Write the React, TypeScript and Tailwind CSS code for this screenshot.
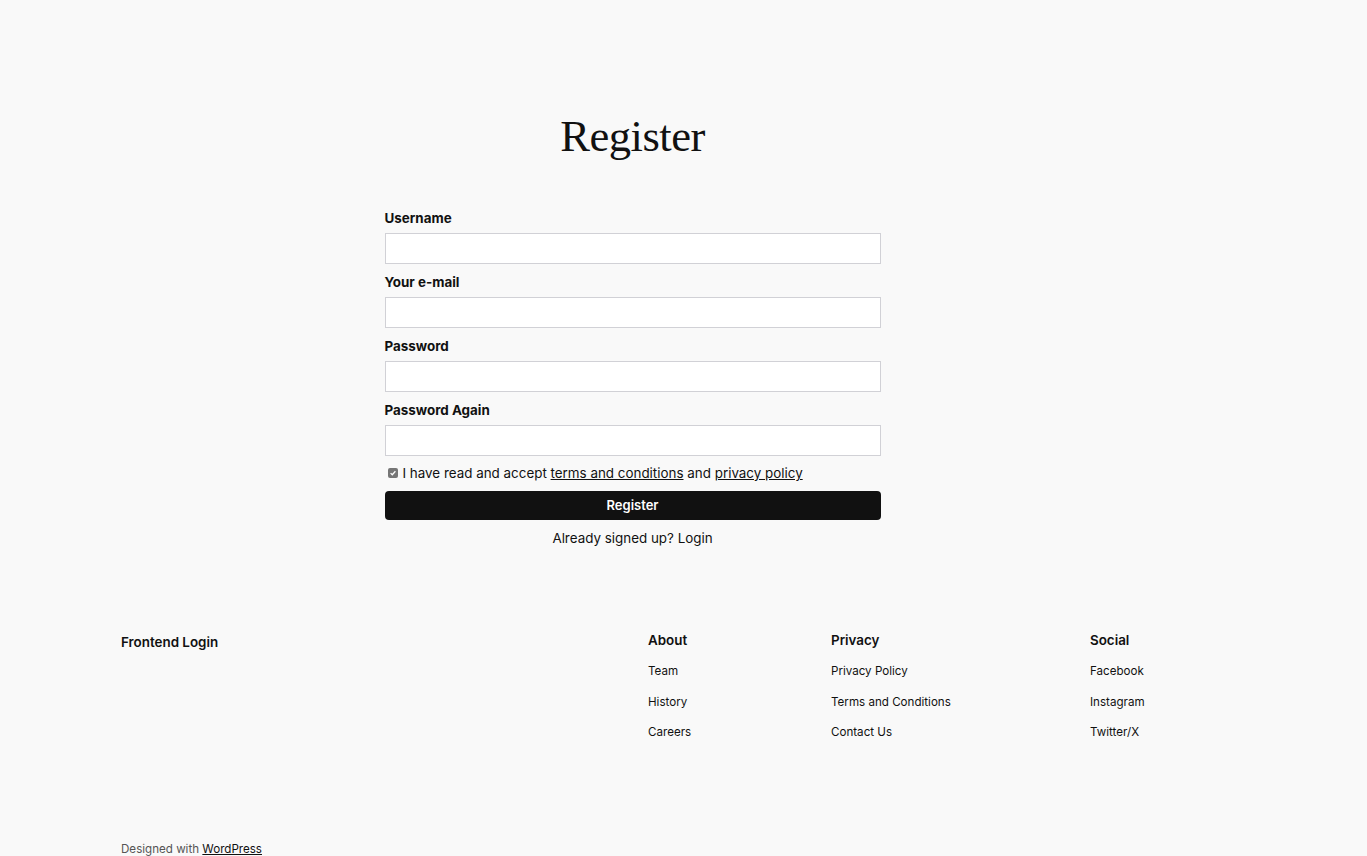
import React from "react";

function Field({ label, type = "text" }: { label: string; type?: string }) {
  return (
    <div className="flex flex-col">
      <label className="text-[13.4px] leading-[20px] font-bold text-[#111]">{label}</label>
      <input
        type={type}
        className="mt-[5px] h-[31px] w-full border border-[#d1d1d6] bg-white px-2 text-[13px] outline-none"
      />
    </div>
  );
}

function FooterCol({ title, links, w }: { title: string; links: string[]; w: string }) {
  return (
    <div className={`flex flex-col ${w}`}>
      <div className="text-[13.4px] leading-[20px] font-semibold text-[#111]">{title}</div>
      <div className="mt-[11px] flex flex-col gap-[10.5px]">
        {links.map((l) => (
          <a key={l} className="text-[11.6px] leading-[20px] text-[#111]">
            {l}
          </a>
        ))}
      </div>
    </div>
  );
}

export default function App() {
  return (
    <div
      className="min-h-[856px] w-full bg-[#f9f9f9] text-[#111]"
      style={{ fontFamily: "Inter, 'Noto Sans', sans-serif" }}
    >
      <main className="flex flex-col items-center pt-[108px] pr-[102px]">
        <h1
          className="text-[44.6px] leading-[56px] font-normal tracking-[-0.5px] text-[#111]"
          style={{ fontFamily: "'Liberation Serif', 'DejaVu Serif', serif" }}
        >
          Register
        </h1>
        <form className="mt-[44px] flex w-[496px] flex-col gap-[8px]" onSubmit={(e) => e.preventDefault()}>
          <Field label="Username" />
          <Field label="Your e-mail" type="email" />
          <Field label="Password" type="password" />
          <Field label="Password Again" type="password" />
          <div className="-mt-[1px] flex h-[20px] items-center text-[13.4px] leading-[20px] text-[#111]">
            <span className="mx-[3px] flex h-[10px] w-[10px] items-center justify-center rounded-[2px] bg-[#767676]">
              <svg viewBox="0 0 10 10" className="h-[8px] w-[8px]">
                <path d="M2 5.2 L4.1 7.2 L8 2.8" stroke="#fff" strokeWidth="1.6" fill="none" />
              </svg>
            </span>
            <span className="ml-[2px]">
              I have read and accept <a className="underline">terms and conditions</a> and{" "}
              <a className="underline">privacy policy</a>
            </span>
          </div>
          <button
            type="submit"
            className="h-[29px] w-full rounded-[4px] bg-[#111] text-[13px] font-semibold text-white"
          >
            Register
          </button>
          <div className="text-center text-[13.4px] leading-[20px] text-[#111]">
            Already signed up? <a>Login</a>
          </div>
        </form>
      </main>
      <footer className="mt-[82px] px-[121px]">
        <div className="flex">
          <div className="w-[527px] pt-[2px] text-[13.4px] leading-[20px] font-semibold text-[#111]">
            Frontend Login
          </div>
          <FooterCol title="About" links={["Team", "History", "Careers"]} w="w-[183px]" />
          <FooterCol
            title="Privacy"
            links={["Privacy Policy", "Terms and Conditions", "Contact Us"]}
            w="w-[259px]"
          />
          <FooterCol title="Social" links={["Facebook", "Instagram", "Twitter/X"]} w="w-[150px]" />
        </div>
        <div className="mt-[98px] pb-[8px] text-[11.6px] leading-[18px] text-[#555]">
          Designed with <a className="text-[#111] underline">WordPress</a>
        </div>
      </footer>
    </div>
  );
}
